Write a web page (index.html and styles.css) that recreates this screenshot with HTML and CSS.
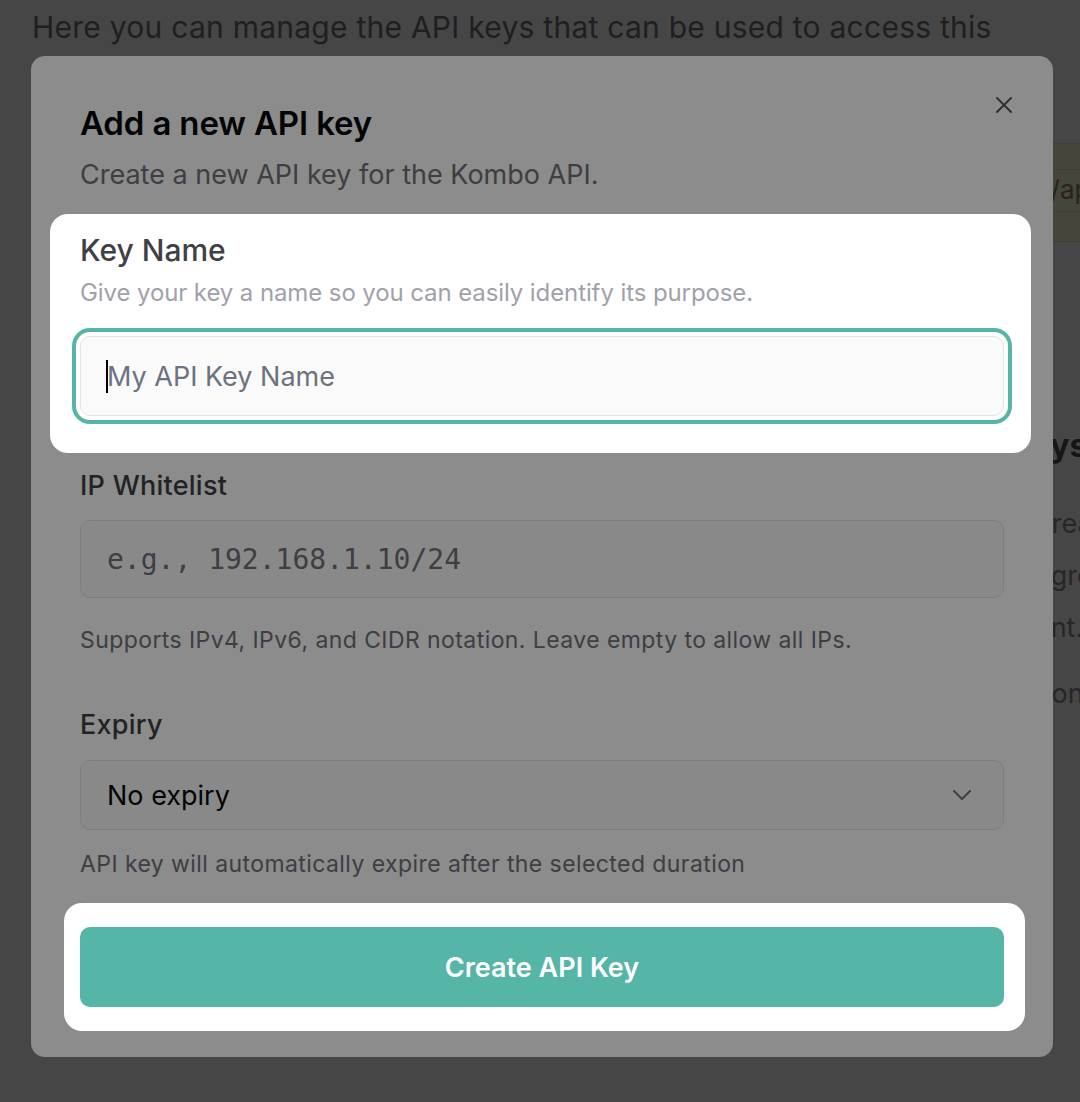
FILE: index.html
```html
<!DOCTYPE html>
<html lang="en">
<head>
<meta charset="utf-8">
<title>API Keys</title>
<link rel="stylesheet" href="styles.css">
</head>
<body>
  <div class="page">
    <p class="intro">Here you can manage the API keys that can be used to access this</p>
    <div class="page-grid">
      <div class="page-main"></div>
      <aside class="page-side">
        <div class="notice">
          <div class="notice-row"></div>
          <div class="notice-row notice-code">Use /api</div>
          <div class="notice-row"></div>
        </div>
        <h2 class="side-title">Keys</h2>
        <p class="side-text">Create<br>Agreement<br>Ant.</p>
        <p class="side-text">Don't</p>
      </aside>
    </div>
  </div>

  <div class="backdrop"></div>

  <div class="dialog-layer">
    <div class="dialog" role="dialog" aria-labelledby="dlg-title">
      <button class="close" type="button" aria-label="Close">
        <svg viewBox="0 0 16 16" width="16" height="16"><path d="M1 1L15 15M15 1L1 15" /></svg>
      </button>
      <h1 class="dialog-title" id="dlg-title">Add a new API key</h1>
      <p class="dialog-sub">Create a new API key for the Kombo API.</p>

      <div class="field field-name">
        <label class="label-lg" for="key-name">Key Name</label>
        <p class="hint">Give your key a name so you can easily identify its purpose.</p>
        <div class="input-wrap">
          <input class="input input-focused" id="key-name" type="text" placeholder="My API Key Name">
          <span class="caret"></span>
        </div>
      </div>

      <div class="field field-ip">
        <label class="label" for="ip">IP Whitelist</label>
        <input class="input input-mono" id="ip" type="text" placeholder="e.g., 192.168.1.10/24">
        <p class="help help-ip">Supports IPv4, IPv6, and CIDR notation. Leave empty to allow all IPs.</p>
      </div>

      <div class="field field-expiry">
        <label class="label" for="expiry">Expiry</label>
        <div class="select-wrap">
          <select class="select" id="expiry">
            <option>No expiry</option>
          </select>
          <svg class="chevron" viewBox="0 0 18 10" width="18" height="10"><path d="M1 1L9 9L17 1" /></svg>
        </div>
        <p class="help help-expiry">API key will automatically expire after the selected duration</p>
      </div>

      <button class="primary" type="button">Create API Key</button>
    </div>
  </div>

  <svg class="tour-overlay" viewBox="0 0 1080 1102" width="1080" height="1102" aria-hidden="true">
    <path fill-rule="evenodd" d="M0 0H1080V1102H0Z
      M68 214H1013A18 18 0 0 1 1031 232V435A18 18 0 0 1 1013 453H68A18 18 0 0 1 50 435V232A18 18 0 0 1 68 214Z
      M82 903H1007A18 18 0 0 1 1025 921V1013A18 18 0 0 1 1007 1031H82A18 18 0 0 1 64 1013V921A18 18 0 0 1 82 903Z" />
  </svg>
</body>
</html>
```

FILE: styles.css
```css
* {
  box-sizing: border-box;
}

html,
body {
  margin: 0;
  padding: 0;
}

body {
  width: 1080px;
  height: 1102px;
  overflow: hidden;
  position: relative;
  background: #ffffff;
  font-family: Inter, "Noto Sans", "Liberation Sans", sans-serif;
  color: #18181b;
}

/* ---------- background page ---------- */
.page {
  padding: 8px 0 0 32px;
}

.intro {
  margin: 0;
  font-size: 30px;
  line-height: 38px;
  letter-spacing: 0.25px;
  color: #71717a;
  white-space: nowrap;
}

.page-grid {
  display: grid;
  grid-template-columns: 1000px 400px;
}

.page-side {
  padding-top: 97px;
}

.notice {
  background: #fef9d8;
  border-top: 1px solid #e6e1c8;
  border-bottom: 1px solid #e6e1c8;
}

.notice-row {
  height: 25px;
}

.notice-row + .notice-row {
  border-top: 1px solid #e6e1c8;
}

.notice-code {
  height: 42px;
  font-size: 26px;
  line-height: 40px;
  color: #9a7b4f;
  white-space: nowrap;
  text-indent: -37px;
}

.notice-row:last-child {
  height: 30px;
}

.side-title {
  margin: 184px 0 0;
  font-size: 32px;
  line-height: 40px;
  font-weight: 700;
  color: #52525b;
  text-indent: -22px;
}

.side-text {
  margin: 32px 0 0;
  font-size: 27px;
  line-height: 52px;
  color: #8a8a93;
  white-space: nowrap;
}

.side-text + .side-text {
  margin-top: 14px;
}

/* ---------- dialog ---------- */
.backdrop {
  position: fixed;
  inset: 0;
  background: rgba(0, 0, 0, 0.5);
}

.dialog-layer {
  position: fixed;
  inset: 0;
  padding: 56px 0 0 31px;
}

.dialog {
  position: relative;
  width: 1022px;
  background: #ffffff;
  border-radius: 14px;
  padding: 47px 49px 50px;
}

.close {
  position: absolute;
  top: 41px;
  right: 41px;
  width: 16px;
  height: 16px;
  padding: 0;
  border: 0;
  background: none;
  display: flex;
}

.close svg path {
  stroke: #52525b;
  stroke-width: 1.8;
  fill: none;
  stroke-linecap: round;
}

.dialog-title {
  margin: 0;
  font-size: 33px;
  line-height: 40px;
  font-weight: 600;
  letter-spacing: -0.15px;
  color: #09090b;
}

.dialog-sub {
  margin: 15px 0 0;
  font-size: 27px;
  line-height: 34px;
  color: #71717a;
}

.field {
  display: flex;
  flex-direction: column;
}

.field-name {
  margin-top: 40px;
}

.label-lg {
  font-size: 30px;
  line-height: 36px;
  font-weight: 500;
  color: #3f3f46;
}

.hint {
  margin: 9px 0 0;
  font-size: 24px;
  line-height: 32px;
  letter-spacing: -0.1px;
  color: #a1a1aa;
}

.input-wrap {
  position: relative;
  margin-top: 27px;
}

.input {
  display: block;
  width: 100%;
  height: 80px;
  padding: 0 26px;
  border: 1px solid #e4e4e7;
  border-radius: 10px;
  background: #fafafa;
  font-family: inherit;
  font-size: 27px;
  color: #09090b;
  outline: none;
}

.input::placeholder {
  color: #6b7280;
  opacity: 1;
}

.input-focused {
  box-shadow: 0 0 0 4px #ffffff, 0 0 0 8px #55b5a6;
}

.caret {
  position: absolute;
  left: 26px;
  top: 24px;
  width: 2px;
  height: 33px;
  background: #000000;
}

.field-ip {
  margin-top: 54px;
}

.label {
  font-size: 27px;
  line-height: 32px;
  font-weight: 500;
  letter-spacing: 0.25px;
  color: #3f3f46;
}

.field-ip .input {
  margin-top: 18px;
  height: 78px;
}

.input-mono {
  font-family: "DejaVu Sans Mono", "Liberation Mono", monospace;
  font-size: 28px;
}

.input-mono::placeholder {
  color: #71717a;
}

.help {
  margin: 0;
  font-size: 23px;
  line-height: 30px;
  letter-spacing: 0.42px;
  color: #71717a;
}

.help-ip {
  margin-top: 27px;
}

.field-expiry {
  margin-top: 54px;
}

.select-wrap {
  position: relative;
  margin-top: 19px;
}

.select {
  display: block;
  width: 100%;
  height: 70px;
  padding: 0 26px;
  border: 1px solid #e4e4e7;
  border-radius: 10px;
  background: #fafafa;
  font-family: inherit;
  font-size: 27px;
  color: #09090b;
  appearance: none;
  -webkit-appearance: none;
  outline: none;
}

.chevron {
  position: absolute;
  right: 33px;
  top: 30px;
}

.chevron path {
  fill: none;
  stroke: #71717a;
  stroke-width: 2;
  stroke-linecap: round;
  stroke-linejoin: round;
}

.help-expiry {
  margin-top: 19px;
}

.primary {
  display: block;
  width: 100%;
  height: 80px;
  margin-top: 48px;
  border: 0;
  border-radius: 10px;
  background: #55b5a6;
  color: #ffffff;
  font-family: inherit;
  font-size: 27px;
  font-weight: 600;
}

/* ---------- onboarding tour spotlight ---------- */
.tour-overlay {
  position: fixed;
  left: 0;
  top: 0;
}

.tour-overlay path {
  fill: rgba(0, 0, 0, 0.45);
}
```
